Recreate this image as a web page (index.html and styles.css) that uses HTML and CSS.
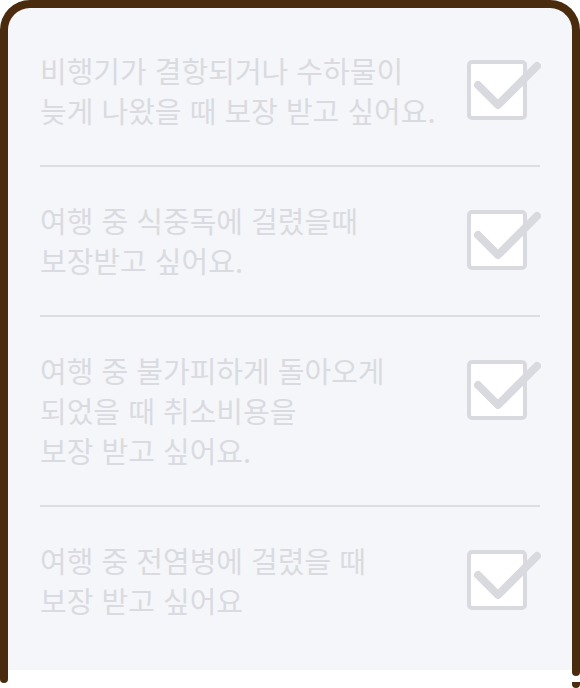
FILE: index.html
```html
<!DOCTYPE html>
<html lang="ko">
<head>
<meta charset="utf-8">
<link rel="stylesheet" href="styles.css">
</head>
<body>
<div class="card">
  <ul class="list">
    <li class="row">
      <p class="label">비행기가 결항되거나 수하물이<br>늦게 나왔을 때 보장 받고 싶어요.</p>
      <svg class="check" viewBox="0 0 76 66" width="76" height="66"><rect x="4" y="6" width="56" height="56" rx="3" /><polyline points="13,29 33,49 72,10" /></svg>
    </li>
    <li class="row">
      <p class="label">여행 중 식중독에 걸렸을때<br>보장받고 싶어요.</p>
      <svg class="check" viewBox="0 0 76 66" width="76" height="66"><rect x="4" y="6" width="56" height="56" rx="3" /><polyline points="13,29 33,49 72,10" /></svg>
    </li>
    <li class="row">
      <p class="label">여행 중 불가피하게 돌아오게<br>되었을 때 취소비용을<br>보장 받고 싶어요.</p>
      <svg class="check" viewBox="0 0 76 66" width="76" height="66"><rect x="4" y="6" width="56" height="56" rx="3" /><polyline points="13,29 33,49 72,10" /></svg>
    </li>
    <li class="row">
      <p class="label">여행 중 전염병에 걸렸을 때<br>보장 받고 싶어요</p>
      <svg class="check" viewBox="0 0 76 66" width="76" height="66"><rect x="4" y="6" width="56" height="56" rx="3" /><polyline points="13,29 33,49 72,10" /></svg>
    </li>
  </ul>
</div>
</body>
</html>
```
FILE: styles.css
```css
html, body {
  margin: 0;
  padding: 0;
  background: #ffffff;
}
body {
  width: 580px;
  height: 688px;
  overflow: hidden;
  font-family: "Noto Sans CJK KR", "Noto Sans", sans-serif;
}
.card {
  position: relative;
  box-sizing: border-box;
  width: 580px;
  height: 670px;
  background: #f5f6fa;
  border: 8px solid #4b2b0d;
  border-bottom: 0;
  border-radius: 30px 30px 0 0;
}
.card::before {
  content: "";
  position: absolute;
  left: -8px;
  top: 100%;
  width: 8px;
  height: 13px;
  background: #4b2b0d;
  border-radius: 0 0 4px 4px;
}
.card::after {
  content: "";
  position: absolute;
  right: -8px;
  top: 100%;
  width: 8px;
  height: 6px;
  background: #4b2b0d;
  border-radius: 0 0 4px 4px;
  box-shadow: 0 12px 0 0 #4b2b0d;
}
.list {
  list-style: none;
  margin: 0;
  padding: 9px 32px 0 32px;
}
.row {
  display: flex;
  align-items: flex-start;
  justify-content: space-between;
  padding: 33px 0 35px;
  border-bottom: 2px solid #dcdee3;
}
.row:last-child {
  border-bottom: 0;
}
.label {
  margin: 0;
  font-size: 29px;
  line-height: 40px;
  color: #dadbe0;
  letter-spacing: 0;
}
.check {
  flex: none;
  margin: 6px -1px 0 0;
  fill: #ffffff;
  stroke: #d8dadf;
}
.check rect {
  stroke-width: 4;
}
.check polyline {
  fill: none;
  stroke-width: 8;
  stroke-linecap: round;
  stroke-linejoin: round;
}
```
